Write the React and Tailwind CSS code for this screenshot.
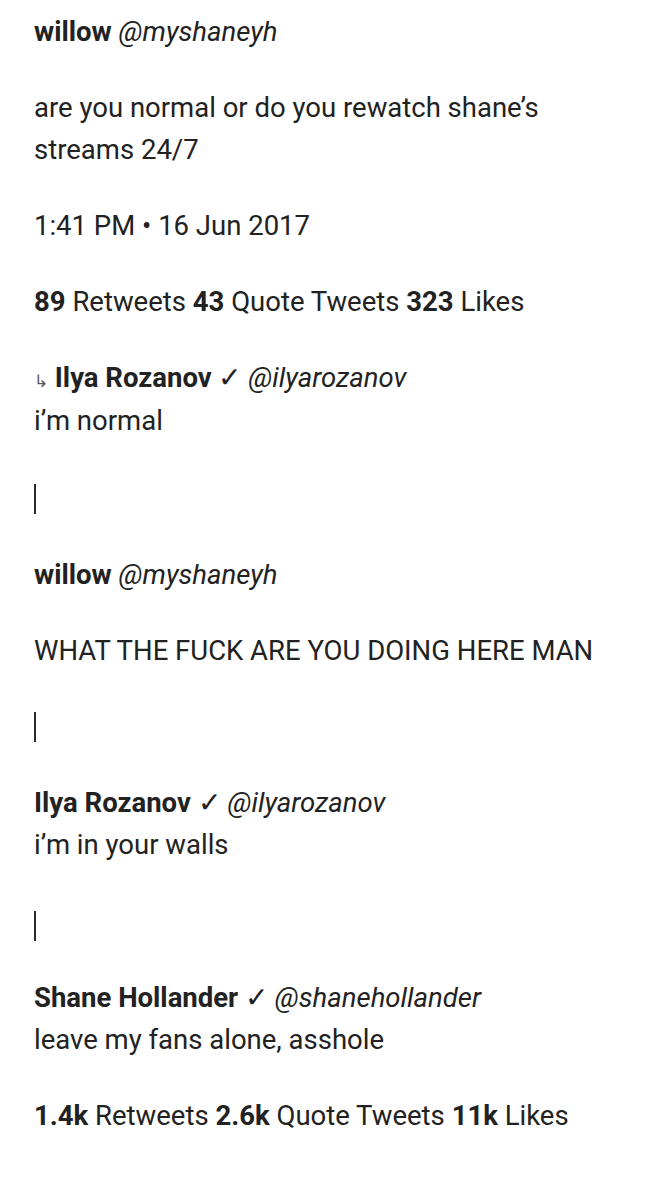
function Bar() {
  return (
    <div className="flex h-[42px] items-center">
      <span className="block h-[30px] w-[2px] bg-[#2a2a2a]" />
    </div>
  );
}

export default function App() {
  return (
    <div
      className="min-h-[1200px] bg-white px-[34px] pt-[11px] text-[27.5px] leading-[42px] text-[#222]"
      style={{ fontFamily: "Roboto, 'Liberation Sans', sans-serif" }}
    >
      <div className="flex flex-col gap-[34px]">
        <p>
          <span className="font-bold">willow</span>{" "}
          <span className="italic">@myshaneyh</span>
        </p>
        <p>
          are you normal or do you rewatch shane’s
          <br />
          streams 24/7
        </p>
        <p>1:41 PM • 16 Jun 2017</p>
        <p>
          <span className="font-bold">89</span> Retweets{" "}
          <span className="font-bold">43</span> Quote Tweets{" "}
          <span className="font-bold">323</span> Likes
        </p>
        <div>
          <p>
            <span className="text-[17px] text-[#555]">↳</span>{" "}
            <span className="font-bold">Ilya Rozanov</span> ✓{" "}
            <span className="italic">@ilyarozanov</span>
          </p>
          <p className="-mt-[2px]">i’m normal</p>
        </div>
        <div className="mt-[2px]">
          <Bar />
        </div>
        <p>
          <span className="font-bold">willow</span>{" "}
          <span className="italic">@myshaneyh</span>
        </p>
        <p>WHAT THE FUCK ARE YOU DOING HERE MAN</p>
        <Bar />
        <div>
          <p>
            <span className="font-bold">Ilya Rozanov</span> ✓{" "}
            <span className="italic">@ilyarozanov</span>
          </p>
          <p>i’m in your walls</p>
        </div>
        <div className="mt-[5px]">
          <Bar />
        </div>
        <div className="-mt-[4px]">
          <p>
            <span className="font-bold">Shane Hollander</span> ✓{" "}
            <span className="italic">@shanehollander</span>
          </p>
          <p>leave my fans alone, asshole</p>
        </div>
        <p>
          <span className="font-bold">1.4k</span> Retweets{" "}
          <span className="font-bold">2.6k</span> Quote Tweets{" "}
          <span className="font-bold">11k</span> Likes
        </p>
      </div>
    </div>
  );
}
